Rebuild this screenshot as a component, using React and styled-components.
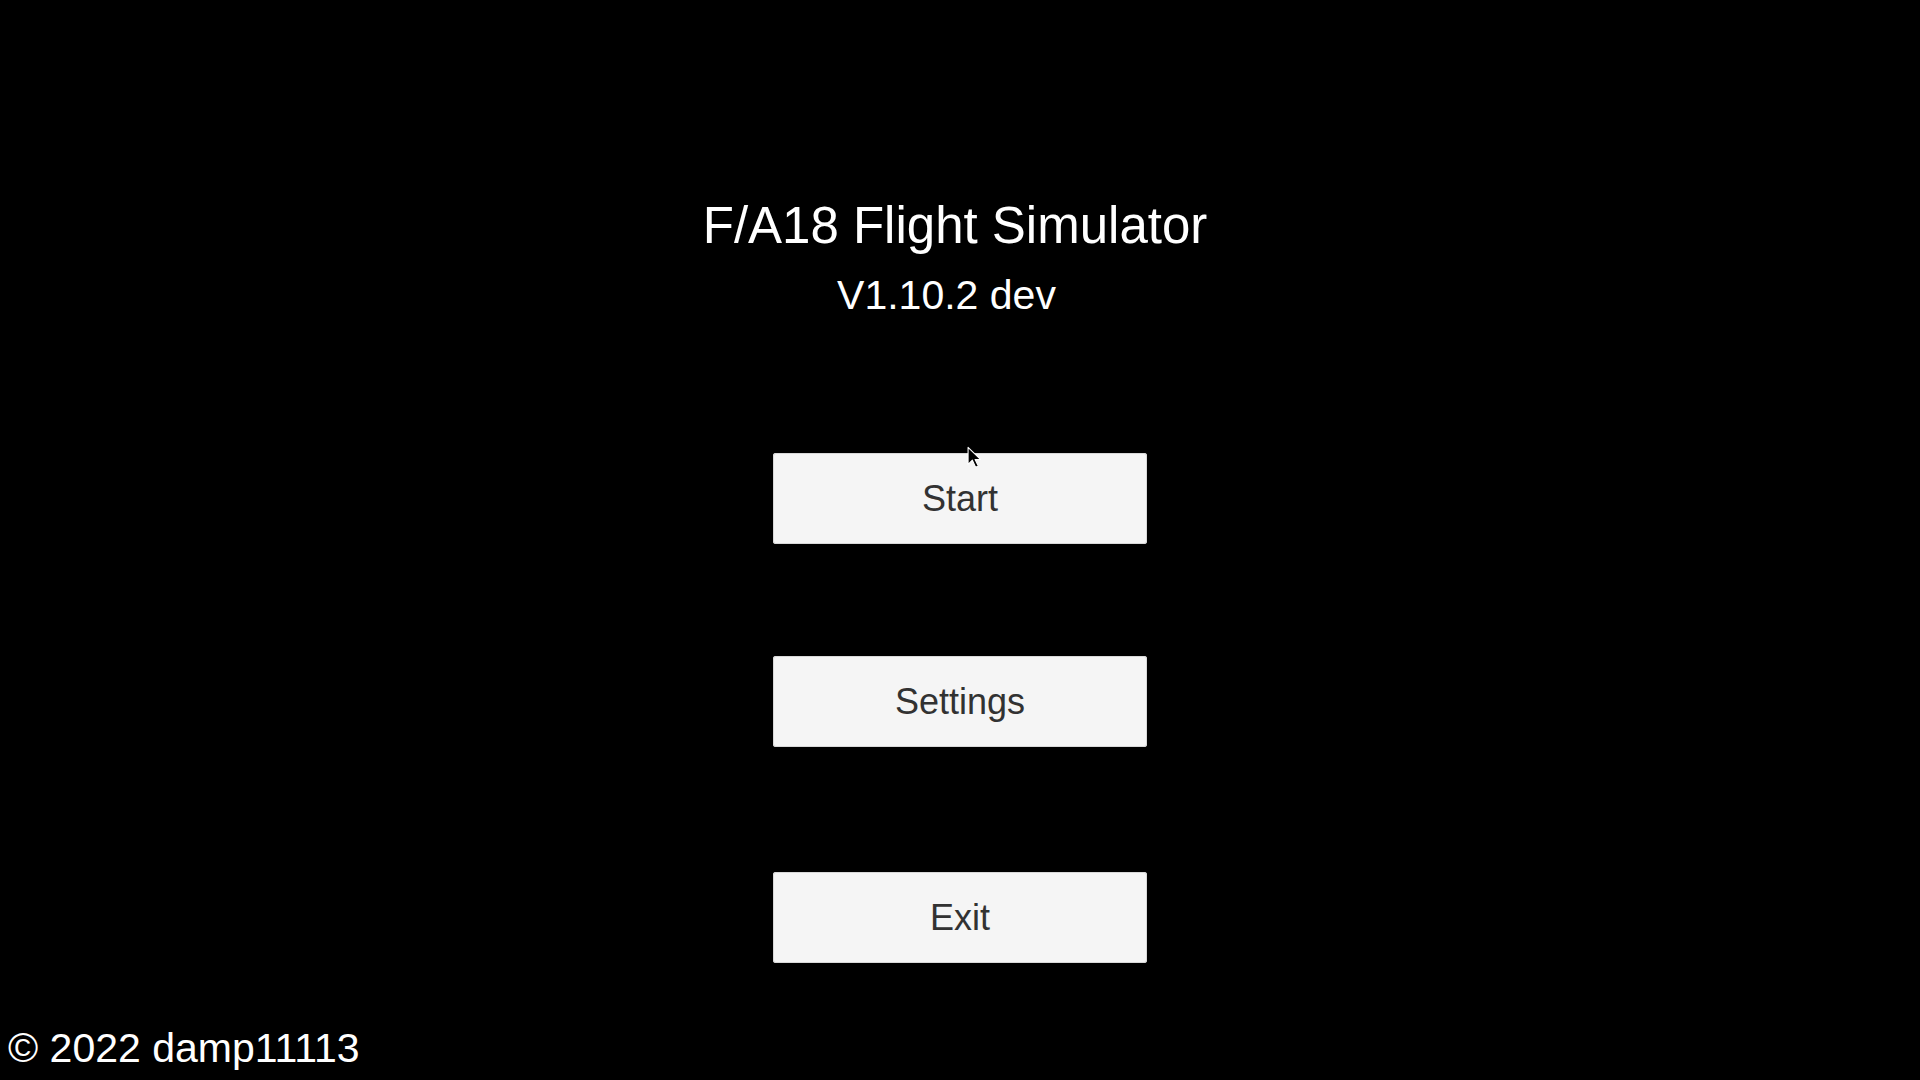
import React from "react";
import styled, { createGlobalStyle } from "styled-components";

const Global = createGlobalStyle`
  html, body { margin: 0; padding: 0; background: #000; }
  body { font-family: "Liberation Sans", Arial, sans-serif; }
`;

const Page = styled.div`
  position: relative;
  height: 1080px;
  width: 1920px;
  background: #000;
  display: flex;
  flex-direction: column;
  overflow: hidden;
`;

const Main = styled.main`
  display: flex;
  flex-direction: column;
  align-items: center;
  padding-top: 200px;
`;

const Title = styled.h1`
  margin: 0;
  font-weight: 400;
  font-size: 51px;
  line-height: 51px;
  color: #fff;
  padding-right: ${(p) => p.$shift || 0}px;
`;

const Version = styled.h2`
  margin: 24px 0 0;
  font-weight: 400;
  font-size: 41px;
  line-height: 41px;
  color: #fff;
  padding-right: ${(p) => p.$shift || 0}px;
`;

const Menu = styled.nav`
  display: flex;
  flex-direction: column;
  align-items: center;
  margin-top: 137px;
`;

const MenuButton = styled.button`
  width: 374px;
  height: 91px;
  margin-top: ${(p) => p.$gap || 0}px;
  background: #f5f5f5;
  border: none;
  border-radius: 3px;
  box-shadow: inset 0 0 0 1px #d8d8d8;
  font-family: "Liberation Sans", Arial, sans-serif;
  font-size: 36px;
  line-height: 36px;
  color: #323232;
  padding: 0;
  cursor: pointer;
`;

const Footer = styled.footer`
  margin-top: auto;
  padding: 0 0 11px 8px;
  font-size: 41px;
  line-height: 41px;
  color: #fff;
`;

const Pointer = styled.svg`
  position: absolute;
  left: 967px;
  top: 446px;
  width: 14px;
  height: 23px;
`;

export default function App() {
  return (
    <Page>
      <Global />
      <Main>
        <Title $shift={10}>F/A18 Flight Simulator</Title>
        <Version $shift={27}>V1.10.2 dev</Version>
        <Menu>
          <MenuButton>Start</MenuButton>
          <MenuButton $gap={112}>Settings</MenuButton>
          <MenuButton $gap={125}>Exit</MenuButton>
        </Menu>
      </Main>
      <Footer>© 2022 damp11113</Footer>
      <Pointer viewBox="0 0 13 21">
        <path
          d="M1 1 L1 17 L5 13 L8 19.5 L10.5 18.5 L7.5 12.3 L12.5 12.3 Z"
          fill="#000"
          stroke="#fff"
          strokeWidth="1"
          strokeLinejoin="round"
        />
      </Pointer>
    </Page>
  );
}
